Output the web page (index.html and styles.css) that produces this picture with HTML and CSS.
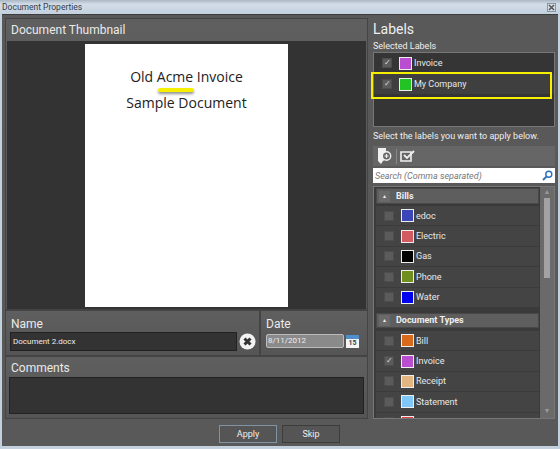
FILE: index.html
```html
<!DOCTYPE html>
<html>
<head>
    <title>Document Properties</title>
    <link rel="stylesheet" href="styles.css">
</head>
<body>

<div class="window">
    <div class="titlebar">
        <span>Document Properties</span>
        <span class="close-btn">
            <svg width="7" height="7" viewBox="0 0 7 7"><path d="M1 1l5 5M6 1l-5 5" stroke="#555" stroke-width="1.5"/></svg>
        </span>
    </div>

    <div class="client">
        <div class="columns">
            <!-- Left column -->
            <div class="left">
                <div class="panel thumb-panel">
                    <div class="panel-title thumb-title">Document Thumbnail</div>
                    <div class="thumb-area">
                        <div class="paper">
                            <p class="paper-title">Old Acme Invoice</p>
                            <p class="paper-sub">Sample Document</p>
                            <span class="underline-mark"></span>
                        </div>
                    </div>
                </div>

                <div class="name-row">
                    <div class="panel name-panel">
                        <div class="panel-title low">Name</div>
                        <div class="name-field">
                            <div class="input-dark">Document 2.docx</div>
                            <svg class="clear-icon" width="17" height="17" viewBox="0 0 17 17">
                                <circle cx="8.5" cy="8.5" r="8" fill="#f2f2f2"/>
                                <path d="M5.5 5.5l6 6M11.5 5.5l-6 6" stroke="#333" stroke-width="3"/>
                            </svg>
                        </div>
                    </div>
                    <div class="panel date-panel">
                        <div class="panel-title low">Date</div>
                        <div class="date-field">
                            <div class="input-date">8/11/2012</div>
                            <div class="cal-icon"><span class="cal-top"></span><span class="cal-num">15</span></div>
                        </div>
                    </div>
                </div>

                <div class="panel comments-panel">
                    <div class="panel-title">Comments</div>
                    <div class="comments-box"></div>
                </div>
            </div>

            <!-- Right column -->
            <div class="right">
                <h2 class="labels-title">Labels</h2>
                <div class="small-heading">Selected Labels</div>
                <div class="selected-box">
                    <div class="label-row selected-row">
                        <span class="check checked">✓</span>
                        <span class="swatch purple"></span>
                        <span>Invoice</span>
                    </div>
                    <div class="label-row selected-row tinted">
                        <span class="check checked">✓</span>
                        <span class="swatch green"></span>
                        <span>My Company</span>
                    </div>
                </div>
                <div class="small-heading hint">Select the labels you want to apply below.</div>
                <div class="toolbar">
                    <svg width="16" height="17" viewBox="0 0 16 17">
                        <path d="M1 0h8v5l-1 1v3l1 1v1l-3 2-2 3-3-3z" fill="#f0f0f0"/>
                        <circle cx="9.5" cy="8" r="4.2" fill="#666" stroke="#f0f0f0" stroke-width="1.4"/>
                        <path d="M7.5 8h4M9.5 6v4" stroke="#f0f0f0" stroke-width="1.2"/>
                    </svg>
                    <span class="tool-sep"></span>
                    <svg width="16" height="14" viewBox="0 0 16 14">
                        <path d="M1 3h10v9H1z" fill="none" stroke="#f0f0f0" stroke-width="1.6"/>
                        <path d="M4 6l3 3 7-7" fill="none" stroke="#f0f0f0" stroke-width="1.8"/>
                    </svg>
                </div>
                <div class="search">
                    <span>Search (Comma separated)</span>
                    <svg width="11" height="11" viewBox="0 0 11 11">
                        <circle cx="6.8" cy="4.2" r="3" fill="none" stroke="#2a6fc0" stroke-width="1.4"/>
                        <path d="M4.6 6.4L1 10" stroke="#2a6fc0" stroke-width="1.8"/>
                    </svg>
                </div>
                <div class="label-list">
                    <div class="list-inner">
                        <div class="group-head"><span class="collapse">▲</span>Bills</div>
                        <div class="label-row"><span class="check"></span><span class="swatch c-edoc"></span><span>edoc</span></div>
                        <div class="label-row"><span class="check"></span><span class="swatch c-electric"></span><span>Electric</span></div>
                        <div class="label-row"><span class="check"></span><span class="swatch c-gas"></span><span>Gas</span></div>
                        <div class="label-row"><span class="check"></span><span class="swatch c-phone"></span><span>Phone</span></div>
                        <div class="label-row"><span class="check"></span><span class="swatch c-water"></span><span>Water</span></div>
                        <div class="group-head second"><span class="collapse">▲</span>Document Types</div>
                        <div class="label-row"><span class="check"></span><span class="swatch c-bill"></span><span>Bill</span></div>
                        <div class="label-row"><span class="check checked">✓</span><span class="swatch purple"></span><span>Invoice</span></div>
                        <div class="label-row"><span class="check"></span><span class="swatch c-receipt"></span><span>Receipt</span></div>
                        <div class="label-row"><span class="check"></span><span class="swatch c-statement"></span><span>Statement</span></div>
                        <div class="label-row"><span class="check"></span><span class="swatch c-red"></span><span></span></div>
                    </div>
                    <div class="scrollbar">
                        <span class="arrow">▲</span>
                        <span class="thumb"></span>
                        <span class="arrow bottom">▼</span>
                    </div>
                </div>
            </div>
        </div>

        <div class="buttons">
            <button class="btn default">Apply</button>
            <button class="btn">Skip</button>
        </div>

        <!-- Yellow callout over the second selected label -->
        <span class="callout"></span>
    </div>
</div>

</body>
</html>
```

FILE: styles.css
```css
* {
    box-sizing: border-box;
}

body {
    margin: 0;
    font-family: Roboto, "Liberation Sans", sans-serif;
    overflow: hidden;
}

.window {
    width: 560px;
    height: 449px;
    background: #c3d0de;
    display: flex;
    flex-direction: column;
    padding: 0 2px 3px;
}

/* Title bar */
.titlebar {
    height: 14px;
    margin: 0 -2px;
    padding: 1px 0 0 2px;
    display: flex;
    justify-content: space-between;
    font-size: 8.5px;
    line-height: 12px;
    color: #33404c;
    background: linear-gradient(180deg, #a9b6c3, #d3dde8 30%, #c3d0de);
}

.close-btn {
    width: 9px;
    height: 9px;
    margin: 2px 4px 0 0;
    display: flex;
    background: #d5dde6;
    border: 1px solid #8a97a3;
    overflow: hidden;
}

/* Main area */
.client {
    position: relative;
    flex: 1;
    background: #595959;
    border-top: 1px solid #3c3c3c;
    display: flex;
    flex-direction: column;
    padding: 3px 3px 0;
    min-height: 0;
}

.columns {
    display: flex;
    gap: 5px;
    height: 401px;
}

.left {
    width: 363px;
    display: flex;
    flex-direction: column;
}

.right {
    width: 182px;
    display: flex;
    flex-direction: column;
}

.panel {
    background: linear-gradient(180deg, #5f5f5f, #555);
    border: 1px solid #444;
}

.panel-title {
    font-size: 12px;
    line-height: 16px;
    color: #eaeaea;
    padding: 3px 0 0 5px;
}

.panel-title.low {
    padding-top: 5px;
}

.thumb-panel {
    height: 292px;
    display: flex;
    flex-direction: column;
}

.thumb-title {
    height: 22px;
    flex: none;
}

.thumb-area {
    flex: 1;
    background: #333;
    margin: 0 1px 1px;
    display: flex;
    justify-content: flex-start;
    padding: 3px 0 2px 78px;
}

.paper {
    position: relative;
    width: 203px;
    height: 263px;
    background: #fff;
    text-align: center;
    color: #222;
    font-family: "Open Sans", sans-serif;
    font-size: 14px;
    line-height: 26px;
    padding-top: 20px;
}

.paper p {
    margin: 0;
}

.underline-mark {
    position: absolute;
    left: 73px;
    top: 44px;
    width: 36px;
    height: 4px;
    border-radius: 2px;
    background: #f6f000;
    box-shadow: 0 2px 3px rgba(0, 0, 0, 0.45);
}

.name-row {
    display: flex;
    height: 46px;
}

.name-panel {
    width: 255px;
}

.date-panel {
    flex: 1;
}

.name-field,
.date-field {
    display: flex;
    align-items: center;
    padding: 0 0 0 4px;
}

.input-dark {
    width: 227px;
    height: 19px;
    background: #333;
    border: 1px solid #222;
    color: #eee;
    font-size: 8px;
    line-height: 17px;
    padding-left: 2px;
}

.clear-icon {
    margin-left: 2px;
}

.date-field {
    padding: 2px 0 0 5px;
}

.input-date {
    width: 78px;
    height: 14px;
    background: #8a8a8a;
    border: 1px solid #bbb;
    border-radius: 2px;
    color: #eee;
    font-size: 8px;
    line-height: 12px;
    padding-left: 1px;
}

.cal-icon {
    width: 13px;
    height: 13px;
    margin-left: 2px;
    background: #f4f4f4;
    display: flex;
    flex-direction: column;
    align-items: center;
}

.cal-top {
    width: 100%;
    height: 4px;
    background: #4f8fce;
}

.cal-num {
    font-size: 7px;
    line-height: 9px;
    font-weight: 700;
    color: #345;
}

.comments-panel {
    height: 63px;
    margin-top: 0;
}

.comments-box {
    height: 37px;
    margin: 1px 3px 0;
    background: #333;
    border: 1px solid #222;
}

/* Labels column */
.labels-title {
    margin: 0;
    font-size: 14px;
    font-weight: 400;
    line-height: 20px;
    color: #eee;
    padding-top: 1px;
}

.small-heading {
    font-size: 9px;
    line-height: 12px;
    color: #eee;
    margin-top: 1px;
}

.hint {
    margin-top: 3px;
}

.selected-box {
    height: 75px;
    margin-top: 0;
    background: #353535;
    border: 1px solid #777;
    padding-top: 0;
}

.label-row {
    display: flex;
    align-items: center;
    height: 20.4px;
    font-size: 9px;
    color: #e8e8e8;
    padding-left: 8px;
    background: #444;
    border-bottom: 1px solid #3b3b3b;
}

.selected-row {
    height: 20px;
    background: transparent;
    border-bottom: 0;
    padding-left: 8px;
    margin-bottom: 1px;
}

.tinted {
    background: #3f3f3f;
}

.check {
    width: 10px;
    height: 10px;
    background: #5b5b5b;
    border: 1px solid #4d4d4d;
    margin-right: 7px;
    color: #ddd;
    font-size: 8px;
    line-height: 8px;
    text-align: center;
    flex: none;
}

.swatch {
    width: 13px;
    height: 13px;
    border: 1px solid #eee;
    margin-right: 2px;
    flex: none;
}

.purple { background: #b94fd0; }
.green { background: #22c322; }
.c-edoc { background: #3c46b8; }
.c-electric { background: #d25a60; }
.c-gas { background: #000; }
.c-phone { background: #6f9020; }
.c-water { background: #0000f0; }
.c-bill { background: #d86a1c; }
.c-receipt { background: #e2b682; }
.c-statement { background: #80c6f6; }
.c-red { background: #e04040; }

.toolbar {
    height: 20px;
    margin-top: 4px;
    background: #666;
    display: flex;
    align-items: center;
    padding-left: 4px;
    gap: 3px;
}

.tool-sep {
    width: 1px;
    height: 15px;
    background: #888;
}

.search {
    height: 15px;
    margin-top: 2px;
    background: #fff;
    display: flex;
    align-items: center;
    justify-content: space-between;
    padding: 0 2px;
    font-size: 9px;
    font-style: italic;
    color: #777;
}

.label-list {
    flex: 1;
    margin-top: 3px;
    display: flex;
    background: #3a3a3a;
    border: 1px solid #777;
    min-height: 0;
    overflow: hidden;
}

.list-inner {
    flex: 1;
    padding: 1px 1px 0 2px;
    overflow: hidden;
}

.group-head {
    height: 16px;
    margin-bottom: 2px;
    background: #5e5e5e;
    border: 1px solid #484848;
    font-size: 9px;
    font-weight: 700;
    line-height: 14px;
    color: #eee;
    display: flex;
    align-items: center;
}

.group-head.second {
    height: 15px;
    margin: 5px 0 3px;
}

.collapse {
    width: 11px;
    height: 11px;
    margin: 0 6px 0 2px;
    background: #6a6a6a;
    font-size: 5px;
    line-height: 11px;
    text-align: center;
    color: #eee;
}

.scrollbar {
    width: 14px;
    flex: none;
    background: #6a6a6a;
    display: flex;
    flex-direction: column;
    align-items: center;
    font-size: 7px;
    color: #9a9a9a;
}

.arrow {
    height: 11px;
    line-height: 11px;
}

.arrow.bottom {
    margin-top: auto;
    line-height: 14px;
    height: 14px;
}

.thumb {
    width: 6px;
    height: 80px;
    background: #a2a2a2;
}

/* Bottom buttons */
.buttons {
    display: flex;
    justify-content: flex-start;
    gap: 5px;
    padding: 6px 0 0 214px;
}

.btn {
    width: 58px;
    height: 18px;
    padding: 0;
    background: #555;
    border: 1px solid #3c3c3c;
    color: #eee;
    font-family: inherit;
    font-size: 9px;
}

.btn.default {
    border: 1px solid #7f93a3;
}

.callout {
    position: absolute;
    left: 369px;
    top: 57px;
    width: 181px;
    height: 27px;
    border: 2px solid #f6f000;
}
```
